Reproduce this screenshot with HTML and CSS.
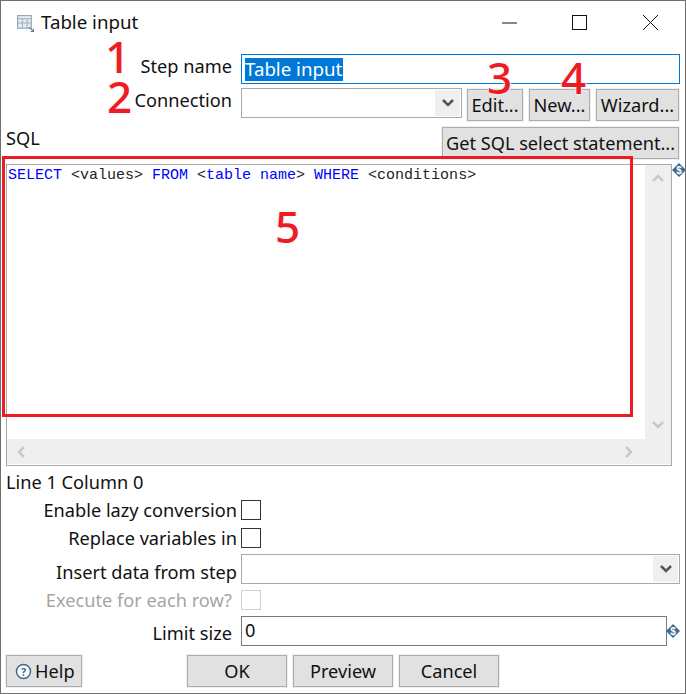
FILE: index.html
```html
<!DOCTYPE html>
<html lang="en">
<head>
<meta charset="utf-8">
<title>Table input</title>
<link rel="stylesheet" href="styles.css">
</head>
<body>
<div class="window">
  <header class="titlebar">
    <svg class="title-icon" width="19" height="19" viewBox="0 0 18 18" fill="none">
      <rect x="1.500" y="1.500" width="13" height="12" fill="#e4ebf1" stroke="#8ea3b4"/>
      <path d="M1.500 4.500h13M1.500 8.500h13M6 4.500v9M10.500 4.500v9" stroke="#9fb0bf"/>
      <path d="M12.500 12.500l4 4M16.500 14v2.500H14" stroke="#5b7c98"/>
    </svg>
    <span class="title">Table input</span>
    <div class="controls">
      <svg width="17" height="17" viewBox="0 0 17 17" class="ctl-min"><path d="M1 9h15" stroke="#111" stroke-width="1"/></svg>
      <svg width="17" height="17" viewBox="0 0 17 17" class="ctl-max"><rect x="1.500" y="1.500" width="14" height="14" fill="none" stroke="#111"/></svg>
      <svg width="17" height="17" viewBox="0 0 17 17" class="ctl-close"><path d="M1 1l15 15M16 1L1 16" stroke="#111" stroke-width="1"/></svg>
    </div>
  </header>

  <div class="row row-step">
    <label class="label">Step name</label>
    <div class="field focus"><span class="selected">Table input</span></div>
  </div>

  <div class="row row-conn">
    <label class="label">Connection</label>
    <div class="field combo conn-combo"><span class="combo-btn"><svg width="14" height="10" viewBox="0 0 14 10"><path d="M2 2l5 5 5-5" fill="none" stroke="#555" stroke-width="2.500"/></svg></span></div>
    <button class="btn btn-edit">Edit...</button>
    <button class="btn btn-new">New...</button>
    <button class="btn btn-wizard">Wizard...</button>
  </div>

  <div class="row row-sql">
    <span class="sql-label">SQL</span>
    <button class="btn btn-get">Get SQL select statement...</button>
  </div>

  <div class="editor-wrap">
    <div class="editor">
      <div class="editor-main">
        <div class="code"><span class="kw">SELECT</span> &lt;values&gt; <span class="kw">FROM</span> &lt;<span class="kw">table name</span>&gt; <span class="kw">WHERE</span> &lt;conditions&gt;</div>
        <div class="vscroll">
          <svg width="14" height="10" viewBox="0 0 14 10"><path d="M2 8l5-5 5 5" fill="none" stroke="#c8c8c8" stroke-width="2.500"/></svg>
          <svg width="14" height="10" viewBox="0 0 14 10"><path d="M2 2l5 5 5-5" fill="none" stroke="#c8c8c8" stroke-width="2.500"/></svg>
        </div>
      </div>
      <div class="hscroll">
        <svg width="10" height="14" viewBox="0 0 10 14"><path d="M8 2L3 7l5 5" fill="none" stroke="#c8c8c8" stroke-width="2.500"/></svg>
        <svg width="10" height="14" viewBox="0 0 10 14"><path d="M2 2l5 5-5 5" fill="none" stroke="#c8c8c8" stroke-width="2.500"/></svg>
      </div>
    </div>
    <svg class="var-icon var-sql" width="14" height="14" viewBox="0 0 14 14"><path d="M7 0l7 7-7 7-7-7z" fill="#3d6a91"/><text x="7" y="10.500" class="var-text">$</text></svg>
  </div>

  <div class="status">Line 1 Column 0</div>

  <div class="row row-check">
    <label class="label label-wide">Enable lazy conversion</label>
    <span class="check"></span>
  </div>
  <div class="row row-check row-replace">
    <label class="label label-wide">Replace variables in</label>
    <span class="check"></span>
  </div>
  <div class="row row-insert">
    <label class="label label-wide label-low">Insert data from step</label>
    <div class="field combo"><span class="combo-btn"><svg width="14" height="10" viewBox="0 0 14 10"><path d="M2 2l5 5 5-5" fill="none" stroke="#555" stroke-width="2.500"/></svg></span></div>
  </div>
  <div class="row row-check row-exec">
    <label class="label disabled">Execute for each row?</label>
    <span class="check check-off"></span>
  </div>
  <div class="row row-limit">
    <label class="label label-low2">Limit size</label>
    <div class="field limit">0</div>
    <svg class="var-icon" width="14" height="14" viewBox="0 0 14 14"><path d="M7 0l7 7-7 7-7-7z" fill="#3d6a91"/><text x="7" y="10.500" class="var-text">$</text></svg>
  </div>

  <footer class="footer">
    <button class="btn btn-help"><svg width="17" height="17" viewBox="0 0 17 17"><circle cx="8.500" cy="8.500" r="7" fill="#fff" stroke="#41688a" stroke-width="1.500"/><text x="8.500" y="12.500" class="help-q">?</text></svg>Help</button>
    <button class="btn btn-foot btn-ok">OK</button>
    <button class="btn btn-foot">Preview</button>
    <button class="btn btn-foot">Cancel</button>
  </footer>

  <div class="annotation-box"></div>
  <span class="num n1">1</span>
  <span class="num n2">2</span>
  <span class="num n3">3</span>
  <span class="num n4">4</span>
  <span class="num n5">5</span>
</div>
</body>
</html>
```
FILE: styles.css
```css
* { box-sizing: border-box; }
html, body { margin: 0; padding: 0; background: #fff; }
.window {
  position: relative;
  width: 686px;
  height: 694px;
  border: 1px solid #6e6e6e;
  background: #fff;
  padding: 0 5px;
  font-family: "Noto Sans", "Open Sans", sans-serif;
  font-size: 18.2px;
  color: #111;
  overflow: hidden;
}
.titlebar { display: flex; align-items: center; height: 43px; margin: 0 -5px; padding: 0 26px 0 15px; }
.title-icon { flex: none; margin-top: 2px; }
.title { margin-left: 6px; margin-top: -2px; font-size: 18.7px; }
.controls { margin-left: auto; display: flex; align-items: center; }
.ctl-max { margin-left: 53px; }
.ctl-close { margin-left: 54px; }
.row { display: flex; align-items: flex-start; }
.label { flex: none; width: 226px; margin-right: 9px; text-align: right; white-space: nowrap; line-height: 24px; }
.label-wide { width: 231px; margin-right: 4px; }
.label-low { padding-top: 6px; }
.label-low2 { padding-top: 4px; }
.disabled { color: #a5a5a5; }
.row-step { margin-top: 10px; height: 30px; }
.row-conn { margin-top: 4px; height: 33px; }
.row-sql { margin-top: 6px; height: 32px; justify-content: space-between; padding-right: 1px; }
.field { flex: 1; height: 30px; border: 1px solid #a9a9a9; background: #fff; }
.focus { border-color: #0078d7; padding: 3px 3px; }
.selected { display: block; width: max-content; height: 23px; line-height: 21px; background: #0078d7; color: #fff; padding: 0 1px 0 0; font-size: 18.7px; }
.combo { display: flex; justify-content: flex-end; padding: 1px; }
.conn-combo { flex: none; width: 221px; }
.combo-btn { width: 25px; background: #efefef; display: flex; align-items: center; justify-content: center; }
.btn {
  font: inherit; color: #111; background: #e1e1e1; border: 1px solid #adadad;
  outline: 1px solid #f0f0f0; outline-offset: 0;
  padding: 0; height: 32px; line-height: 28px; white-space: nowrap;
}
.btn-edit { width: 56px; margin: 1px 0 0 5px; }
.btn-new { width: 61px; margin: 1px 0 0 6px; }
.btn-wizard { width: 83px; margin: 1px 0 0 6px; }
.btn-get { width: 237px; }
.sql-label { line-height: 22px; }
.editor-wrap { position: relative; margin-top: 5px; width: 666px; height: 302px; }
.editor { height: 100%; border: 1px solid #a9a9a9; display: flex; flex-direction: column; }
.editor-main { flex: 1; display: flex; min-height: 0; }
.code { flex: 1; font-family: "Liberation Mono", "Courier New", monospace; font-size: 15px; line-height: 17px; padding: 2px 0 0 1px; color: #222; white-space: pre; }
.kw { color: #0000ff; }
.vscroll { width: 26px; background: #efefef; display: flex; flex-direction: column; justify-content: space-between; align-items: center; padding: 8px 0 9px; }
.hscroll { height: 26px; background: #efefef; border-bottom: 1px solid #fff; display: flex; justify-content: space-between; align-items: center; padding: 0 37px 0 9px; }
.var-icon { flex: none; display: block; }
.var-sql { position: absolute; left: 666px; top: -1px; }
.var-text { font: bold 10px "Liberation Sans", sans-serif; fill: #fff; text-anchor: middle; }
.status { margin-top: 5px; height: 23px; line-height: 22px; }
.row-check { height: 20px; margin-top: 6px; align-items: center; }
.row-replace { margin-top: 8px; }
.check { width: 20px; height: 20px; border: 1px solid #333; background: #fff; flex: none; }
.check-off { border-color: #cfcfcf; }
.row-insert { margin-top: 6px; height: 30px; align-items: center; }
.row-exec { margin-top: 6px; }
.row-limit { margin-top: 6px; height: 30px; align-items: center; }
.limit { flex: none; width: 426px; border-color: #7a7a7a; padding-left: 3px; line-height: 26px; }
.row-limit .var-icon { margin-left: -1px; }
.footer { display: flex; margin-top: 9px; height: 32px; }
.btn-help { width: 76px; display: flex; align-items: center; padding-left: 8px; gap: 3px; }
.help-q { font: bold 11px "Noto Sans", sans-serif; fill: #41688a; text-anchor: middle; }
.btn-foot { width: 100px; margin-left: 6px; }
.btn-ok { margin-left: 105px; }
.annotation-box { position: absolute; left: 1px; top: 155px; width: 631px; height: 261px; border: 3px solid #ed1c24; pointer-events: none; }
.num { position: absolute; color: #ed1c24; font-size: 44px; font-weight: 500; line-height: 50px; font-family: "Noto Sans", sans-serif; text-shadow: 0 0 2px #fff, 0 0 2px #fff, 0 0 3px #ddd; }
.n1 { left: 104px; top: 30px; }
.n2 { left: 106px; top: 70px; }
.n3 { left: 486px; top: 51px; }
.n4 { left: 560px; top: 51px; }
.n5 { left: 274px; top: 200px; }
```
